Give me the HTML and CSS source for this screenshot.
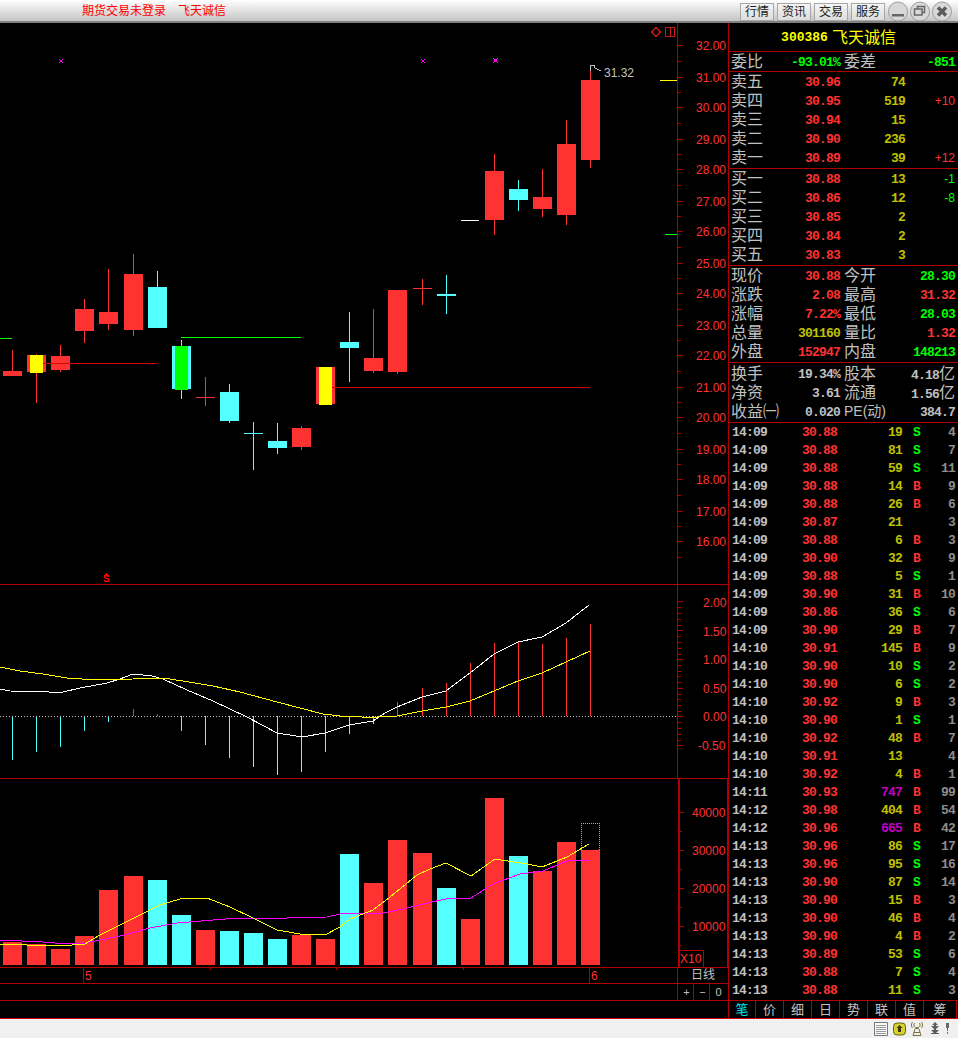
FILE: index.html
```html
<!DOCTYPE html>
<html lang="zh-CN">

<head>
  <meta charset="UTF-8">
  <title>飞天诚信 300386</title>
  <link rel="stylesheet" href="styles.css">
</head>

<body>
  <!-- Title bar -->
  <header class="topbar">
    <div class="notice"><span>期货交易未登录</span><span>飞天诚信</span></div>
    <div class="actions">
      <button class="menu-btn">行情</button>
      <button class="menu-btn">资讯</button>
      <button class="menu-btn">交易</button>
      <button class="menu-btn">服务</button>
      <svg class="win-btns" width="66" height="22" viewBox="0 0 66 22">
        <g class="win-circle">
          <circle cx="10" cy="10.500" r="9.500" />
          <circle cx="32" cy="10.500" r="9.500" />
          <circle cx="54" cy="10.500" r="9.500" />
        </g>
        <path class="win-glyph" d="M4 13h12v2.500H4z" />
        <path class="win-outline" d="M29.500 7.500v-2h7v6h-2.500M26.500 8h7.500v6h-7.500z" />
        <path class="win-x" d="M50 6.500l8 8M58 6.500l-8 8" />
      </svg>
    </div>
  </header>

  <main class="main">
    <section class="charts">
      <!-- Candles and price axis, drawn in page coordinates -->
      <svg class="pane" width="728" height="561" viewBox="0 23 728 561">
        <path class="fill-up" d="M3 371h19v5H3zM27 355h19v17H27zM51 356h19v14H51zM75 309h19v22H75zM99 312h19v12H99zM124 274h19v56h-19zM292 428h19v19h-19zM316 367h19v37h-19zM364 358h19v13h-19zM388 290h19v82h-19zM485 171h19v49h-19zM533 197h19v12h-19zM557 144h19v71h-19zM581 80h19v80h-19z" />
        <path class="fill-up" d="M12 350h1v21h-1zM36 354h1v49h-1zM60 345h1v27h-1zM84 299h1v44h-1zM108 269h1v61h-1zM133 254h1v82h-1zM301 426h1v24h-1zM373 309h1v64h-1zM397 372h1v2h-1zM494 154h1v81h-1zM542 169h1v48h-1zM566 120h1v105h-1zM590 69h1v99h-1zM205 377h1v29h-1zM196 397h19v1h-19zM422 279h1v26h-1zM413 288h19v1h-19z" />
        <path class="fill-cyan" d="M148 287h19v41h-19zM172 346h19v43h-19zM220 392h19v29h-19zM268 441h19v7h-19zM340 342h19v6h-19zM509 189h19v11h-19z" />
        <path class="fill-cyan" d="M157 271h1v16h-1zM181 340h1v59h-1zM229 384h1v39h-1zM253 422h1v48h-1zM244 433h19v1h-19zM277 423h1v31h-1zM349 312h1v70h-1zM446 275h1v39h-1zM437 294h19v2h-19zM518 180h1v31h-1z" />
        <path class="fill-yellow" d="M30 355h13v18H30zM319 367h13v38h-13zM660 80h17v1h-17z" />
        <path class="fill-green" d="M175 346h13v44h-13zM0 338h12v1H0zM181 337h120v1H181zM665 234h12v1h-12z" />
        <path class="fill-dim" d="M43 363h114v1H43zM332 387h258v1H332z" />
        <path class="fill-white" d="M461 220h18v1h-18z" />
        <path class="fill-magenta" d="M59 59h1v1h-1zM62 59h1v1h-1zM60 60h2v2h-2zM59 62h1v1h-1zM62 62h1v1h-1zM421 59h1v1h-1zM424 59h1v1h-1zM422 60h2v2h-2zM421 62h1v1h-1zM424 62h1v1h-1zM493 58h1v1h-1zM497 58h1v1h-1zM494 59h3v3h-3zM493 62h1v1h-1zM497 62h1v1h-1z" />
        <path class="stroke-grey" d="M590.500 70.500v-5h4v2.500M595 68l4 2h2" />
        <text class="label-grey" x="604" y="77">31.32</text>
        <path class="stroke-bright" d="M656 27.500l4.500 4.500-4.500 4.500-4.500-4.500zM665.500 27.500h9v9h-9zM670.500 27.500v9" />
        <path class="fill-axis" d="M677 23h1v561h-1z" />
        <path class="fill-axis" d="M678 45h5v1h-5zM678 61h3v1h-3zM678 77h5v1h-5zM678 92h3v1h-3zM678 107h5v1h-5zM678 123h3v1h-3zM678 139h5v1h-5zM678 154h3v1h-3zM678 169h5v1h-5zM678 185h3v1h-3zM678 201h5v1h-5zM678 216h3v1h-3zM678 231h5v1h-5zM678 247h3v1h-3zM678 263h5v1h-5zM678 278h3v1h-3zM678 293h5v1h-5zM678 309h3v1h-3zM678 325h5v1h-5zM678 340h3v1h-3zM678 355h5v1h-5zM678 371h3v1h-3zM678 387h5v1h-5zM678 402h3v1h-3zM678 417h5v1h-5zM678 433h3v1h-3zM678 449h5v1h-5zM678 464h3v1h-3zM678 479h5v1h-5zM678 495h3v1h-3zM678 511h5v1h-5zM678 526h3v1h-3zM678 541h5v1h-5zM678 557h3v1h-3z" />
        <g class="axis-text">
          <text x="696" y="50">32.00</text>
          <text x="696" y="82">31.00</text>
          <text x="696" y="112">30.00</text>
          <text x="696" y="144">29.00</text>
          <text x="696" y="174">28.00</text>
          <text x="696" y="206">27.00</text>
          <text x="696" y="236">26.00</text>
          <text x="696" y="268">25.00</text>
          <text x="696" y="298">24.00</text>
          <text x="696" y="330">23.00</text>
          <text x="696" y="360">22.00</text>
          <text x="696" y="392">21.00</text>
          <text x="696" y="422">20.00</text>
          <text x="696" y="454">19.00</text>
          <text x="696" y="484">18.00</text>
          <text x="696" y="516">17.00</text>
          <text x="696" y="546">16.00</text>
        </g>
        <path class="fill-red" d="M106.500 573l3 3h-6z" />
        <text class="mark-s" x="103" y="582">S</text>
      </svg>

      <!-- MACD -->
      <svg class="pane" width="728" height="193" viewBox="0 585 728 193">
        <path class="fill-cyan" d="M12 716h1v44h-1zM36 716h1v36h-1zM60 716h1v31h-1zM84 716h1v15h-1zM108 716h1v6h-1zM181 716h1v15h-1zM205 716h1v29h-1zM229 716h1v42h-1zM253 716h1v51h-1zM277 716h1v59h-1zM301 716h1v56h-1zM325 716h1v36h-1zM349 716h1v18h-1zM373 716h1v8h-1z" />
        <path class="fill-up" d="M133 709h1v7h-1zM157 714h1v2h-1zM397 702h1v14h-1zM422 688h1v28h-1zM446 683h1v33h-1zM470 663h1v53h-1zM494 643h1v73h-1zM518 641h1v75h-1zM542 644h1v72h-1zM566 638h1v78h-1zM590 624h1v92h-1z" />
        <path class="zero-line" d="M0 716.500H677" />
        <polyline class="line-white" points="0,689 10,691 49,692 63,692 80,688 107,683 120,679 133,674 152,676 163,679 187,690 213,701 247,717 277,733 302,737 325,733 349,725 373,721 385,713 397,707 422,697 446,691 470,673 494,654 518,642 542,637 566,623 589,605" />
        <polyline class="line-yellow" points="0,667 20,671 43,674 67,678 97,680 133,679 163,678 183,681 213,686 240,692 277,702 300,708 323,714 340,716 362,717 377,717 397,716 422,711 446,707 470,701 494,691 518,681 542,673 566,662 590,651" />
        <path class="fill-axis" d="M677 585h1v193h-1z" />
        <path class="fill-axis" d="M678 601h5v1h-5zM678 607h3v1h-3zM678 613h3v1h-3zM678 619h3v1h-3zM678 625h3v1h-3zM678 630h5v1h-5zM678 636h3v1h-3zM678 642h3v1h-3zM678 648h3v1h-3zM678 654h3v1h-3zM678 659h5v1h-5zM678 665h3v1h-3zM678 671h3v1h-3zM678 676h3v1h-3zM678 682h3v1h-3zM678 688h5v1h-5zM678 694h3v1h-3zM678 699h3v1h-3zM678 705h3v1h-3zM678 711h3v1h-3zM678 716h5v1h-5zM678 722h3v1h-3zM678 728h3v1h-3zM678 734h3v1h-3zM678 740h3v1h-3zM678 745h5v1h-5z" />
        <g class="axis-text">
          <text x="703" y="607">2.00</text>
          <text x="703" y="636">1.50</text>
          <text x="703" y="664">1.00</text>
          <text x="703" y="693">0.50</text>
          <text x="703" y="721">0.00</text>
          <text x="698" y="750">-0.50</text>
        </g>
      </svg>

      <!-- Volume -->
      <svg class="pane" width="728" height="188" viewBox="0 779 728 188">
        <path class="fill-up" d="M3 942h19v23H3zM27 944h19v21H27zM51 949h19v16H51zM75 936h19v29H75zM99 890h19v75H99zM124 876h19v89h-19zM196 930h19v35h-19zM292 935h19v30h-19zM316 939h19v26h-19zM364 883h19v82h-19zM388 840h19v125h-19zM413 853h19v112h-19zM461 919h19v46h-19zM485 798h19v167h-19zM533 871h19v94h-19zM557 842h19v123h-19zM581 850h19v115h-19z" />
        <path class="fill-cyan" d="M148 880h19v85h-19zM172 915h19v50h-19zM220 931h19v34h-19zM244 933h19v32h-19zM268 939h19v26h-19zM340 854h19v111h-19zM437 888h19v77h-19zM509 856h19v109h-19z" />
        <path class="dotted-box" d="M581.500 850V823.500H599.500V850" />
        <polyline class="line-magenta" points="0,940 43,942 55,943 85,943 120,936 150,928 177,923 213,920 240,918 287,918 327,917 340,914 362,913 383,913 403,909 427,903 446,899 471,898 493,884 520,874 543,871 567,861 589,860" />
        <polyline class="line-yellow" points="0,944 23,944 27,945 72,945 85,944 100,935 140,915 160,905 180,899 207,898 230,907 253,918 277,930 300,934 325,935 340,927 350,919 373,910 390,897 417,875 430,869 446,863 471,876 495,859 527,864 542,867 567,857 589,844" />
        <path class="fill-axis" d="M678 779h2v188h-2zM727 779h1v188h-1zM679 812h5v1h-5zM679 831h3v1h-3zM679 850h5v1h-5zM679 869h3v1h-3zM679 888h5v1h-5zM679 907h3v1h-3zM679 926h5v1h-5zM679 945h3v1h-3z" />
        <path class="fill-axis" d="M680 950h24v1h-24zM703 950h1v17h-1z" />
        <g class="axis-text">
          <text x="692" y="817">40000</text>
          <text x="692" y="855">30000</text>
          <text x="692" y="893">20000</text>
          <text x="692" y="931">10000</text>
          <text x="680" y="963">X10</text>
        </g>
      </svg>

      <div class="date-row">
        <svg class="date-axis" width="677" height="15" viewBox="0 968 677 15">
          <path class="fill-axis" d="M83 968h1v15h-1zM589 968h1v15h-1zM210 968h1v2h-1zM336 968h1v2h-1zM463 968h1v2h-1z" />
          <text class="date-text" x="85" y="980">5</text>
          <text class="date-text" x="591" y="980">6</text>
        </svg>
        <div class="period">日线</div>
      </div>
      <div class="zoom-row">
        <div class="zoom-space"></div>
        <div class="zoom-btn">+</div>
        <div class="zoom-btn">−</div>
        <div class="zoom-btn">0</div>
      </div>
      <div class="empty-row"></div>
    </section>

    <!-- Quote panel -->
    <aside class="quote">
      <div class="title yellow"><b>300386</b><span>飞天诚信</span></div>

      <div class="ratio">
        <span class="cn">委比</span><span class="green num">-93.01%</span>
        <span class="cn">委差</span><span class="green num">-851</span>
      </div>

      <div class="book">
        <div class="book-row"><span class="cn">卖五</span><span class="red num">30.96</span><span class="olive num">74</span><span></span></div>
        <div class="book-row"><span class="cn">卖四</span><span class="red num">30.95</span><span class="olive num">519</span><span class="red delta">+10</span></div>
        <div class="book-row"><span class="cn">卖三</span><span class="red num">30.94</span><span class="olive num">15</span><span></span></div>
        <div class="book-row"><span class="cn">卖二</span><span class="red num">30.90</span><span class="olive num">236</span><span></span></div>
        <div class="book-row"><span class="cn">卖一</span><span class="red num">30.89</span><span class="olive num">39</span><span class="red delta">+12</span></div>
      </div>

      <div class="book">
        <div class="book-row"><span class="cn">买一</span><span class="red num">30.88</span><span class="olive num">13</span><span class="green delta">-1</span></div>
        <div class="book-row"><span class="cn">买二</span><span class="red num">30.86</span><span class="olive num">12</span><span class="green delta">-8</span></div>
        <div class="book-row"><span class="cn">买三</span><span class="red num">30.85</span><span class="olive num">2</span><span></span></div>
        <div class="book-row"><span class="cn">买四</span><span class="red num">30.84</span><span class="olive num">2</span><span></span></div>
        <div class="book-row"><span class="cn">买五</span><span class="red num">30.83</span><span class="olive num">3</span><span></span></div>
      </div>

      <div class="stats">
        <div class="stat-row"><span class="cn">现价</span><span class="red num">30.88</span><span class="cn">今开</span><span class="green num">28.30</span></div>
        <div class="stat-row"><span class="cn">涨跌</span><span class="red num">2.08</span><span class="cn">最高</span><span class="red num">31.32</span></div>
        <div class="stat-row"><span class="cn">涨幅</span><span class="red num">7.22%</span><span class="cn">最低</span><span class="green num">28.03</span></div>
        <div class="stat-row"><span class="cn">总量</span><span class="olive num">301160</span><span class="cn">量比</span><span class="red num">1.32</span></div>
        <div class="stat-row"><span class="cn">外盘</span><span class="red num">152947</span><span class="cn">内盘</span><span class="green num">148213</span></div>
      </div>

      <div class="finance">
        <div class="stat-row"><span class="cn">换手</span><span class="grey num">19.34%</span><span class="cn">股本</span><span class="grey num">4.18<i>亿</i></span></div>
        <div class="stat-row"><span class="cn">净资</span><span class="grey num">3.61</span><span class="cn">流通</span><span class="grey num">1.56<i>亿</i></span></div>
        <div class="stat-row"><span class="cn">收益㈠</span><span class="grey num">0.020</span><span class="cn pe">PE(动)</span><span class="grey num">384.7</span></div>
      </div>

      <div class="ticks">
        <div class="tick"><span>14:09</span><span class="red">30.88</span><span class="yellow">19</span><span class="green">S</span><span class="count">4</span></div>
        <div class="tick"><span>14:09</span><span class="red">30.88</span><span class="yellow">81</span><span class="green">S</span><span class="count">7</span></div>
        <div class="tick"><span>14:09</span><span class="red">30.88</span><span class="yellow">59</span><span class="green">S</span><span class="count">11</span></div>
        <div class="tick"><span>14:09</span><span class="red">30.88</span><span class="yellow">14</span><span class="red">B</span><span class="count">9</span></div>
        <div class="tick"><span>14:09</span><span class="red">30.88</span><span class="yellow">26</span><span class="red">B</span><span class="count">6</span></div>
        <div class="tick"><span>14:09</span><span class="red">30.87</span><span class="yellow">21</span><span></span><span class="count">3</span></div>
        <div class="tick"><span>14:09</span><span class="red">30.88</span><span class="yellow">6</span><span class="red">B</span><span class="count">3</span></div>
        <div class="tick"><span>14:09</span><span class="red">30.90</span><span class="yellow">32</span><span class="red">B</span><span class="count">9</span></div>
        <div class="tick"><span>14:09</span><span class="red">30.88</span><span class="yellow">5</span><span class="green">S</span><span class="count">1</span></div>
        <div class="tick"><span>14:09</span><span class="red">30.90</span><span class="yellow">31</span><span class="red">B</span><span class="count">10</span></div>
        <div class="tick"><span>14:09</span><span class="red">30.86</span><span class="yellow">36</span><span class="green">S</span><span class="count">6</span></div>
        <div class="tick"><span>14:09</span><span class="red">30.90</span><span class="yellow">29</span><span class="red">B</span><span class="count">7</span></div>
        <div class="tick"><span>14:10</span><span class="red">30.91</span><span class="yellow">145</span><span class="red">B</span><span class="count">9</span></div>
        <div class="tick"><span>14:10</span><span class="red">30.90</span><span class="yellow">10</span><span class="green">S</span><span class="count">2</span></div>
        <div class="tick"><span>14:10</span><span class="red">30.90</span><span class="yellow">6</span><span class="green">S</span><span class="count">2</span></div>
        <div class="tick"><span>14:10</span><span class="red">30.92</span><span class="yellow">9</span><span class="red">B</span><span class="count">3</span></div>
        <div class="tick"><span>14:10</span><span class="red">30.90</span><span class="yellow">1</span><span class="green">S</span><span class="count">1</span></div>
        <div class="tick"><span>14:10</span><span class="red">30.92</span><span class="yellow">48</span><span class="red">B</span><span class="count">7</span></div>
        <div class="tick"><span>14:10</span><span class="red">30.91</span><span class="yellow">13</span><span></span><span class="count">4</span></div>
        <div class="tick"><span>14:10</span><span class="red">30.92</span><span class="yellow">4</span><span class="red">B</span><span class="count">1</span></div>
        <div class="tick"><span>14:11</span><span class="red">30.93</span><span class="magenta">747</span><span class="red">B</span><span class="count">99</span></div>
        <div class="tick"><span>14:12</span><span class="red">30.98</span><span class="yellow">404</span><span class="red">B</span><span class="count">54</span></div>
        <div class="tick"><span>14:12</span><span class="red">30.96</span><span class="magenta">665</span><span class="red">B</span><span class="count">42</span></div>
        <div class="tick"><span>14:13</span><span class="red">30.96</span><span class="yellow">86</span><span class="green">S</span><span class="count">17</span></div>
        <div class="tick"><span>14:13</span><span class="red">30.96</span><span class="yellow">95</span><span class="green">S</span><span class="count">16</span></div>
        <div class="tick"><span>14:13</span><span class="red">30.90</span><span class="yellow">87</span><span class="green">S</span><span class="count">14</span></div>
        <div class="tick"><span>14:13</span><span class="red">30.90</span><span class="yellow">15</span><span class="red">B</span><span class="count">3</span></div>
        <div class="tick"><span>14:13</span><span class="red">30.90</span><span class="yellow">46</span><span class="red">B</span><span class="count">4</span></div>
        <div class="tick"><span>14:13</span><span class="red">30.90</span><span class="yellow">4</span><span class="red">B</span><span class="count">2</span></div>
        <div class="tick"><span>14:13</span><span class="red">30.89</span><span class="yellow">53</span><span class="green">S</span><span class="count">6</span></div>
        <div class="tick"><span>14:13</span><span class="red">30.88</span><span class="yellow">7</span><span class="green">S</span><span class="count">4</span></div>
        <div class="tick"><span>14:13</span><span class="red">30.88</span><span class="yellow">11</span><span class="green">S</span><span class="count">3</span></div>
      </div>

      <nav class="tabs">
        <span class="tab tab-on">笔</span>
        <span class="tab">价</span>
        <span class="tab">细</span>
        <span class="tab">日</span>
        <span class="tab">势</span>
        <span class="tab">联</span>
        <span class="tab">值</span>
        <span class="tab tab-last">筹</span>
      </nav>
    </aside>
  </main>

  <!-- Status bar -->
  <footer class="statusbar">
    <svg width="16" height="14" viewBox="0 0 16 14">
      <path fill="#fafafa" stroke="#777" d="M1.500 .5h13v13h-13z" />
      <path stroke="#999" d="M3 3.500h10M3 5.500h10M3 7.500h10M3 9.500h10M3 11.500h10" />
    </svg>
    <svg width="13" height="14" viewBox="0 0 13 14">
      <rect x=".5" y="1" width="12" height="12" rx="3.500" fill="#d8d030" stroke="#66620a" />
      <path fill="#3c3a08" d="M6.500 3l3 3H8v4H5V6H3.500z" />
    </svg>
    <svg class="status-antenna" width="12" height="15" viewBox="0 0 12 15">
      <path fill="none" stroke="#77713a" d="M4.500 6.500h3v1h-3zM4 8l-2 6.500h8L8 8M3 11.500h6M1.500 1c-1.500 2-1.500 4 0 6M3.500 2c-.8 1-.8 3 0 4M10.500 1c1.500 2 1.500 4 0 6M8.500 2c.8 1 .8 3 0 4" />
    </svg>
    <svg class="status-tree" width="8" height="13" viewBox="0 0 8 13">
      <path fill="#5c5c5c" d="M4 0l3 3H5v1h3L5 7v1h3l-3 3h3v1H0v-1h3L0 8h3V7L0 4h3V3H1z" />
    </svg>
    <svg class="status-pin" width="4" height="11" viewBox="0 0 4 11">
      <path fill="#6a6a6a" d="M0 0h3v5H2v3H1V5H0zM1 9h1v2H1z" />
    </svg>
  </footer>
</body>

</html>
```

FILE: styles.css
```css
* {
  box-sizing: border-box;
}

html,
body {
  margin: 0;
  height: 1038px;
  overflow: hidden;
}

body {
  background: #000;
  font-family: "Liberation Sans", "Noto Sans CJK SC", sans-serif;
}

/* title bar */
.topbar {
  display: flex;
  justify-content: space-between;
  height: 23px;
  border-bottom: 2px solid #808080;
  background: linear-gradient(#ffffff, #c4c4c4);
}

.notice {
  display: flex;
  gap: 12px;
  padding-left: 82px;
  color: #ff0000;
  font-size: 12px;
  line-height: 22px;
}

.actions {
  display: flex;
  gap: 3px;
  padding: 1px 4px 0 0;
}

.menu-btn {
  width: 34px;
  height: 18px;
  margin: 2px 0 0;
  padding: 0;
  border: 1px solid #a8a8a8;
  background: linear-gradient(#f4f4f4, #dcdcdc);
  color: #222;
  font-family: inherit;
  font-size: 12px;
  line-height: 16px;
}

.win-circle circle {
  fill: #d8d8d8;
  stroke: #9c9c9c;
}

.win-glyph {
  fill: #666;
}

.win-outline {
  fill: none;
  stroke: #666;
  stroke-width: 1.500;
}

.win-x {
  fill: none;
  stroke: #5c5c5c;
  stroke-width: 3.500;
}

/* layout */
.main {
  display: flex;
  height: 995px;
}

.charts {
  display: flex;
  flex-direction: column;
  width: 729px;
  border-right: 1px solid #b00000;
}

.pane {
  display: block;
  flex: none;
  border: 0;
  box-sizing: content-box;
  border-bottom: 1px solid #b00000;
  shape-rendering: crispEdges;
}

/* svg fills */
.fill-up {
  fill: #ff3232;
}

.fill-red {
  fill: #ff0000;
}

.fill-cyan {
  fill: #54ffff;
}

.fill-yellow {
  fill: #ffff00;
}

.fill-green {
  fill: #00ff00;
}

.fill-dim {
  fill: #d80000;
}

.fill-white {
  fill: #ffffff;
}

.fill-magenta {
  fill: #ff00ff;
}

.fill-axis {
  fill: #b00000;
}

.stroke-grey {
  fill: none;
  stroke: #c0c0c0;
}

.stroke-bright {
  fill: none;
  stroke: #c81818;
}

.zero-line {
  fill: none;
  stroke: #c0c0c0;
  stroke-dasharray: 1 2;
}

.dotted-box {
  fill: none;
  stroke: #c0c000;
  stroke-dasharray: 1 1;
}

.line-white,
.line-yellow,
.line-magenta {
  fill: none;
  stroke-width: 1;
}

.line-white {
  stroke: #ffffff;
}

.line-yellow {
  stroke: #ffff00;
}

.line-magenta {
  stroke: #ff00ff;
}

/* svg text */
.axis-text text,
.date-text {
  fill: #ff3232;
  font-family: "Liberation Sans", sans-serif;
  font-size: 12px;
}

.label-grey {
  fill: #c0c0c0;
  font-family: "Liberation Sans", sans-serif;
  font-size: 12px;
}

.mark-s {
  fill: #ff0000;
  font-family: "Liberation Mono", monospace;
  font-size: 11px;
  font-weight: 700;
}

/* under the charts */
.date-row,
.zoom-row {
  display: flex;
  flex: none;
  border-bottom: 1px solid #b00000;
  color: #c0c0c0;
  box-sizing: content-box;
}

.date-row {
  height: 15px;
}

.zoom-row {
  height: 16px;
}

.date-axis {
  display: block;
  flex: none;
}

.period {
  width: 51px;
  border-left: 1px solid #b00000;
  font-size: 12px;
  line-height: 15px;
  text-align: center;
}

.zoom-space {
  width: 677px;
}

.zoom-btn {
  width: 16px;
  padding-left: 2px;
  border-left: 1px solid #b00000;
  font-size: 11px;
  line-height: 16px;
  text-align: center;
}

.empty-row {
  height: 17px;
}

/* quote panel */
.quote {
  display: flex;
  flex-direction: column;
  width: 229px;
  color: #c0c0c0;
}

.title,
.ratio,
.book,
.stats,
.finance,
.ticks {
  flex: none;
  border-bottom: 1px solid #b00000;
  box-sizing: content-box;
}

.title {
  display: flex;
  justify-content: center;
  gap: 4px;
  height: 28px;
  padding-right: 10px;
  font-size: 16px;
  line-height: 29px;
}

.title b {
  font-family: "Liberation Mono", monospace;
  font-size: 13px;
}

.ratio {
  display: grid;
  grid-template-columns: 34px 75px 50px 65px;
  height: 19px;
  padding-left: 2px;
}

.cn {
  font-size: 16px;
  line-height: 19px;
  white-space: nowrap;
}

.num,
.tick span {
  font-family: "Liberation Mono", monospace;
  font-size: 13px;
  font-weight: 700;
  letter-spacing: -.8px;
  line-height: 21px;
  text-align: right;
}

.num i {
  font-family: "Liberation Sans", "Noto Sans CJK SC", sans-serif;
  font-size: 16px;
  font-style: normal;
  font-weight: 400;
  letter-spacing: 0;
  line-height: 19px;
  color: #c0c0c0;
}

.delta {
  font-size: 12px;
  line-height: 20px;
  text-align: right;
}

.book {
  height: 96px;
}

.book-row {
  display: grid;
  grid-template-columns: 34px 75px 65px 50px;
  height: 19px;
  padding-left: 2px;
}

.stats {
  height: 96px;
}

.stat-row {
  display: grid;
  grid-template-columns: 34px 75px 50px 65px;
  height: 19px;
  padding-left: 2px;
}

.stat-row .cn:nth-child(3),
.ratio .cn:nth-child(3) {
  padding-left: 4px;
}

.stat-row .pe {
  font-size: 14px;
}

.finance {
  height: 58px;
  padding-top: 1px;
}

.ticks {
  height: 577px;
}

.tick {
  display: grid;
  grid-template-columns: 36px 69px 65px 32px 21px;
  height: 18px;
  padding-left: 3px;
}

.tick span {
  line-height: 20px;
}

.tick span:first-child {
  color: #c0c0c0;
  text-align: left;
}

.tick span:nth-child(4) {
  padding-left: 11px;
  text-align: left;
}

.tick .count {
  color: #8c8c8c;
}

.tabs {
  display: flex;
  height: 17px;
}

.tab {
  width: 28px;
  border-right: 1px solid #b00000;
  font-size: 13px;
  line-height: 17px;
  text-align: center;
}

.tab:first-child {
  width: 27px;
}

.tab-on {
  color: #00e8e8;
}

.tab-last {
  width: 33px;
}

/* colours */
.red {
  color: #ff3232;
}

.green {
  color: #00ff00;
}

.yellow {
  color: #ffff00;
}

.olive,
.tick .yellow {
  color: #c0c000;
}

.grey {
  color: #c0c0c0;
}

.magenta,
.tick .magenta {
  color: #c000c0;
}

/* status bar */
.statusbar {
  display: flex;
  align-items: center;
  justify-content: flex-end;
  gap: 4px;
  height: 20px;
  padding-right: 8px;
  border-top: 1px solid #d80000;
  background: #f0f0f0;
}

.status-antenna {
  margin-left: 1px;
}

.status-tree {
  margin-left: 4px;
}

.status-pin {
  margin-left: 3px;
}
```
